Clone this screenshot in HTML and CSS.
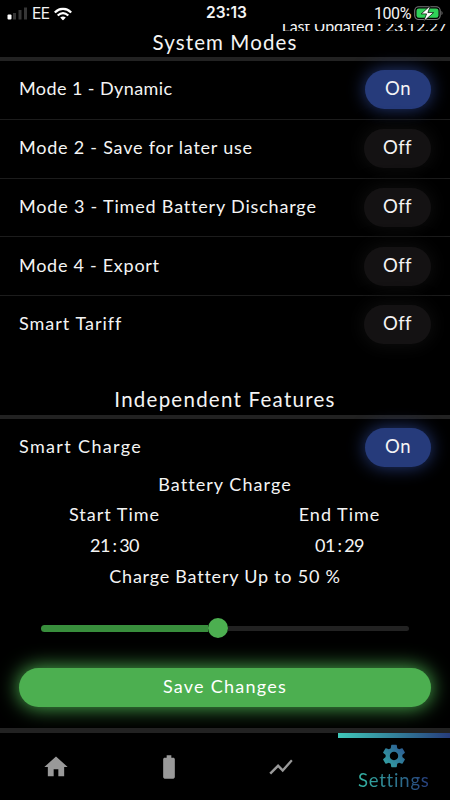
FILE: index.html
```html
<!DOCTYPE html>
<html lang="en">
<head>
<meta charset="utf-8">
<meta name="viewport" content="width=device-width">
<title>Settings</title>
<link rel="stylesheet" href="styles.css">
</head>
<body>
<div class="app">
  <header class="status">
    <div class="carrier">
      <svg class="signal" width="21" height="14" viewBox="0 0 21 14"><rect x="0.5" y="8" width="4" height="5" rx="1" fill="#fff"/><path d="M6 6.5h3V13H6zM11.500 3.500h3V13h-3zM17 1h3v12h-3z" fill="#363636"/></svg>
      <span>EE</span>
      <svg class="wifi" width="18" height="13" viewBox="0 0 18 13" fill="none" stroke="#fff" stroke-width="2.300"><path d="M.8 5Q9-2.600 17.200 5M3.700 8Q9 3.200 14.300 8"/><path d="M6.200 10.100Q9 8 11.800 10.100L9 13Z" fill="#fff" stroke="none"/></svg>
    </div>
    <b class="clock">23:13</b>
    <div class="power">
      <span>100%</span>
      <svg width="30" height="16" viewBox="0 0 30 16"><rect x=".7" y="1.200" width="25.500" height="12.800" rx="4" fill="#000" stroke="#777" stroke-width="1.100"/><rect x="2.500" y="3" width="22" height="9.200" rx="2.300" fill="#30d158"/><path d="M27.500 5.200q2.200 2.300 0 4.600z" fill="#777"/><path d="M16.500 0 7.200 8.400h5.400L9.600 16l10-8.900h-5.700z" fill="#fff" stroke="#000" stroke-width=".7"/></svg>
    </div>
  </header>
  <div class="updated"><span>Last Updated : 23.12.27</span></div>

  <main>
    <h2 class="title modes-title"><span>System Modes</span></h2>
    <section class="modes">
      <div class="row"><span class="m1">Mode 1 - Dynamic</span><button class="pill on">On</button></div>
      <div class="row"><span class="m2">Mode 2 - Save for later use</span><button class="pill">Off</button></div>
      <div class="row"><span class="m3">Mode 3 - Timed Battery Discharge</span><button class="pill">Off</button></div>
      <div class="row"><span class="m4">Mode 4 - Export</span><button class="pill">Off</button></div>
      <div class="row"><span class="m5">Smart Tariff</span><button class="pill">Off</button></div>
    </section>
    <h2 class="title features-title"><span>Independent Features</span></h2>
    <section class="features">
      <div class="row"><span class="sc">Smart Charge</span><button class="pill on">On</button></div>
      <div class="line charge"><span>Battery Charge</span></div>
      <div class="times">
        <div><div class="line label"><span>Start Time</span></div><div class="line value"><span>21 : 30</span></div></div>
        <div><div class="line label"><span>End Time</span></div><div class="line value"><span>01 : 29</span></div></div>
      </div>
      <div class="line limit"><span>Charge Battery Up to 50 %</span></div>
      <div class="slider"><div class="filled"></div><div class="thumb"></div><div class="rest"></div></div>
      <button class="save"><span>Save Changes</span></button>
    </section>
  </main>

  <nav>
    <a class="tab"><svg width="28" height="28" viewBox="0 0 24 24"><path d="M10 20v-6h4v6h5v-8h3L12 3 2 12h3v8z"/></svg></a>
    <a class="tab"><svg width="28" height="28" viewBox="0 0 24 24"><path d="M15.670 4H14V2h-4v2H8.330C7.600 4 7 4.600 7 5.330v15.330C7 21.400 7.600 22 8.330 22h7.330c.74 0 1.340-.6 1.340-1.330V5.330C17 4.600 16.400 4 15.670 4z"/></svg></a>
    <a class="tab"><svg width="28" height="28" viewBox="0 0 24 24"><path d="M3.500 18.490l6-6.010 4 4L22 6.920l-1.410-1.410-7.090 7.970-4-4L2 16.990z"/></svg></a>
    <a class="tab active"><svg width="28" height="28" viewBox="0 0 24 24"><defs><linearGradient id="g" x1="0" y1="1" x2="1" y2="0"><stop offset="0" stop-color="#35aaa5"/><stop offset="1" stop-color="#2b5390"/></linearGradient></defs><path fill="url(#g)" d="M19.140 12.940c.04-.3.060-.61.060-.94 0-.32-.02-.64-.07-.94l2.030-1.580c.18-.14.230-.41.120-.61l-1.920-3.320c-.12-.22-.37-.29-.59-.22l-2.390.96c-.5-.38-1.030-.7-1.620-.94l-.36-2.540c-.04-.24-.24-.41-.48-.41h-3.840c-.24 0-.43.17-.47.41l-.36 2.540c-.59.24-1.130.57-1.620.94l-2.390-.96c-.22-.08-.47 0-.59.22L2.740 8.870c-.12.21-.08.470.12.610l2.030 1.580c-.05.300-.09.630-.09.940s.02.640.07.940l-2.030 1.580c-.18.140-.23.410-.12.610l1.920 3.320c.12.220.37.290.59.220l2.390-.96c.5.380 1.030.7 1.620.94l.36 2.540c.05.240.24.410.48.410h3.840c.24 0 .44-.17.470-.41l.36-2.540c.59-.24 1.130-.56 1.620-.94l2.390.96c.22.080.47 0 .59-.22l1.920-3.320c.12-.22.070-.47-.12-.61l-2.010-1.580zM12 15.600c-1.980 0-3.600-1.620-3.600-3.600s1.620-3.600 3.600-3.600 3.600 1.620 3.600 3.600-1.620 3.600-3.600 3.600z"/></svg><span>Settings</span></a>
  </nav>
</div>
</body>
</html>
```
FILE: styles.css
```css
* { box-sizing: border-box; }
body { margin: 0; background: #000; color: #f4f4f4; font: 18px/22px Lato, "Open Sans", sans-serif; font-variant-ligatures: none; }
button { border: 0; color: inherit; font: inherit; }
.app { width: 450px; height: 800px; overflow: hidden; display: flex; flex-direction: column; background: #000; }
.status { height: 24px; flex: none; display: grid; grid-template-columns: 1fr auto 1fr; align-items: end; padding: 0 5px 0 7px; font: 16px/22px Inter, sans-serif; }
.carrier, .power { display: flex; align-items: center; height: 22px; }
.carrier { gap: 5px; }
.power { justify-content: flex-end; gap: 3px; font-family: Roboto, sans-serif; letter-spacing: -.4px; margin-right: 1px; }
.power svg { margin-top: -1px; }
.power span { margin-top: -1px; }
.carrier span { font-size: 15.5px; margin-left: -1px; margin-top: -1px; letter-spacing: -.6px; }
.carrier, .power { transform: translateY(.5px); }
.clock { font-weight: 600; font-size: 15.5px; letter-spacing: 0; padding-left: 1px; }
.updated { height: 7px; flex: none; overflow: hidden; display: flex; justify-content: flex-end; align-items: flex-end; padding-right: 3px; font-size: 16px; line-height: 16px; letter-spacing: -.15px; }
.updated span { margin-bottom: -3px; }
main { flex: none; height: 697px; }
.title { margin: 0; font-size: 20.5px; font-weight: 400; line-height: 25px; text-align: center; border-bottom: 4px solid #222; letter-spacing: 1.1px; }
.modes-title { height: 31px; margin-top: -1px; line-height: 25px; }
.features-title { height: 30px; margin-top: 34.5px; line-height: 20px; letter-spacing: 1.25px; }
.row { display: flex; height: 58.75px; align-items: center; justify-content: space-between; padding: 0 19px; border-bottom: 1.5px solid #1c1c1c; }
.row > span { margin-top: -3px; }
.m1 { letter-spacing: .42px; }
.m2 { letter-spacing: .78px; }
.m3 { letter-spacing: .82px; }
.m4 { letter-spacing: .73px; }
.m5 { letter-spacing: 1px; }
.sc { letter-spacing: 1.35px; }
.row:last-child, .features .row { border-bottom-color: transparent; }
.features .row { height: 58px; }
.pill { width: 67px; height: 39px; border-radius: 20px; background: #141213; padding: 0 0 3px; box-shadow: 0 0 18px 2px #0e0e0e; margin-top: 0; letter-spacing: .5px; font-size: 18.5px; }
.pill.on { width: 66px; background: #263b7b; box-shadow: 0 0 18px 0 #263b7b; }
.line { text-align: center; height: 22px; }
.charge { margin-top: -4px; letter-spacing: 1.05px; }
.times { display: grid; grid-template-columns: 1fr 1fr; margin-top: 8px; }
.times > div { padding-left: 4px; }
.label { letter-spacing: 1px; }
.value { margin-top: 9px; letter-spacing: -.6px; word-spacing: -1.2px; }
.limit { margin-top: 9px; letter-spacing: .77px; }
.slider { height: 20px; margin: 31px 41px 0; display: flex; align-items: center; }
.filled { width: 167px; height: 7px; border-radius: 4px 0 0 4px; background: #388e3c; }
.thumb { width: 20px; height: 20px; border-radius: 50%; background: #4caf50; }
.rest { flex: 1; height: 5px; border-radius: 0 3px 3px 0; background: #222; }
.save { display: block; width: 412px; height: 39px; margin: 29.5px 19px 0; padding: 0 0 2px; border-radius: 20px; color: #fff; background: #4caf50; box-shadow: 0 0 20px 1px #4caf50; letter-spacing: 1.25px; }
nav { flex: none; height: 72px; border-top: 5px solid #222; background: #000; display: grid; grid-template-columns: repeat(4, 1fr); }
.tab { display: flex; flex-direction: column; align-items: center; justify-content: center; fill: #999; }
.active { justify-content: flex-start; border-top: 5px solid; border-image: linear-gradient(90deg, #40c9b9, #263b7b) 1; padding-top: 4px; }
.active span { margin-top: -1px; font-size: 18.5px; line-height: 22px; letter-spacing: .8px; background: linear-gradient(90deg, #34b6a5, #263b7b); background-clip: text; -webkit-background-clip: text; color: transparent; }
```
